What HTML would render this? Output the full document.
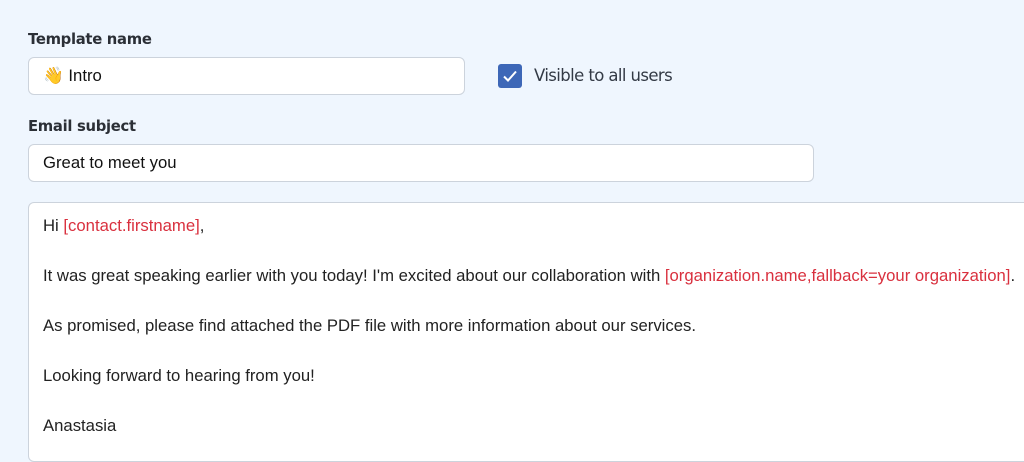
<!DOCTYPE html>
<html><head><style>
body{margin:0;width:1024px;height:444px;background:#eff6fe;font-family:"Liberation Sans",sans-serif;overflow:hidden;position:relative;color:#222}
.lbl{position:absolute;left:28px;font-weight:bold;color:#2b2f36;font-family:"DejaVu Sans","Liberation Sans",sans-serif;font-size:14.8px;letter-spacing:-0.3px}
.inp{position:absolute;left:28px;background:#fff;border:1px solid #ccd3dc;border-radius:6px;box-sizing:border-box;font-size:16.7px;color:#111;padding-left:14px;display:flex;align-items:center}
.r{color:#d9303e}
.ta{position:absolute;left:28px;top:202px;width:1010px;height:260px;background:#fff;border:1px solid #ccd3dc;border-radius:6px;box-sizing:border-box;padding:14px 14px;font-size:16.7px;color:#222}
.ta p{margin:0 0 32px 0;line-height:18px}
</style></head><body>
<div class="lbl" style="top:31px">Template name</div>
<div class="inp" style="top:57px;width:437px;height:38px">👋&nbsp;Intro</div>
<div style="position:absolute;left:498px;top:64px;width:24px;height:24px;background:#3d67b7;border-radius:3px"><svg width="24" height="24"><path d="M6 12.5l4 4 8-9" stroke="#fff" stroke-width="2" fill="none"/></svg></div>
<div style="position:absolute;left:534px;top:66px;font-size:16.5px;color:#333a45;font-family:'DejaVu Sans','Liberation Sans',sans-serif;letter-spacing:-0.6px">Visible to all users</div>
<div class="lbl" style="top:118px">Email subject</div>
<div class="inp" style="top:144px;width:786px;height:38px">Great to meet you</div>
<div class="ta">
<p>Hi <span class="r">[contact.firstname]</span>,</p>
<p>It was great speaking earlier with you today! I'm excited about our collaboration with <span class="r">[organization.name,fallback=your organization]</span>.</p>
<p>As promised, please find attached the PDF file with more information about our services.</p>
<p>Looking forward to hearing from you!</p>
<p>Anastasia</p>
</div>
</body></html>
